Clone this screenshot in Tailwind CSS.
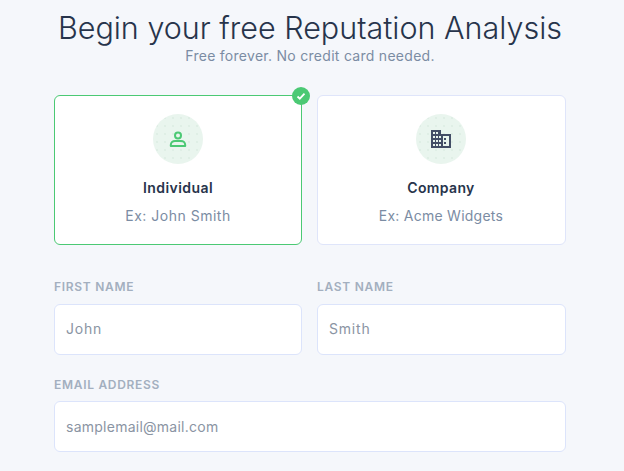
<!DOCTYPE html>
<html lang="en">
  <head>
    <meta charset="UTF-8" />
    <title>Begin your free Reputation Analysis</title>
    <script src="https://cdn.jsdelivr.net/npm/@tailwindcss/browser@4"></script>
  </head>

  <body class="h-[471px] overflow-hidden bg-[#f5f7fb] font-['Inter','Noto_Sans',sans-serif]">
    <main class="ml-[54px] w-[512px] pt-[8px]">
      <!-- Title -->
      <header class="text-center">
        <h1 class="-mx-4 text-[30.5px] leading-[39px] font-light whitespace-nowrap text-[#27344b]">Begin your free Reputation Analysis</h1>
        <p class="text-sm leading-[18px] tracking-[0.28px] text-[#7b8ca3]">Free forever. No credit card needed.</p>
      </header>

      <!-- Account type -->
      <section class="mt-[30px] grid grid-cols-[248px_249px] gap-[15px]">
        <div class="relative flex h-[150px] flex-col items-center rounded-md border border-[#4bc974] bg-white pt-[18px]">
          <div class="flex size-[50px] items-center justify-center rounded-full bg-[#e9f5ee] bg-[radial-gradient(#d3e5da_0.6px,transparent_0.8px)] bg-size-[8px_8px]">
            <svg class="size-5 text-[#4bc974]" viewBox="0 0 20 20" fill="none" stroke="currentColor" stroke-width="2">
              <circle cx="10" cy="6.5" r="3" />
              <path d="M2.800 17v-1c0-2.500 2-4 4.200-4h6c2.200 0 4.200 1.500 4.200 4v1z" stroke-linejoin="round" />
            </svg>
          </div>
          <h2 class="mt-[14px] text-sm leading-5 font-semibold tracking-[0.45px] text-[#27344b]">Individual</h2>
          <p class="mt-2 text-sm leading-5 tracking-[0.5px] text-[#7b8ca3]">Ex: John Smith</p>
          <span class="absolute -top-[9px] -right-[9px] flex size-[18px] items-center justify-center rounded-full bg-[#4bc974]">
            <svg class="size-3 text-white" viewBox="0 0 12 12" fill="none" stroke="currentColor" stroke-width="1.800">
              <path d="M2.500 6.500l2.300 2.200 4.700-5" />
            </svg>
          </span>
        </div>

        <div class="flex h-[150px] flex-col items-center rounded-md border border-[#dfe5fa] bg-white pt-[18px] pr-px">
          <div class="flex size-[50px] items-center justify-center rounded-full bg-[#e9f5ee] bg-[radial-gradient(#d3e5da_0.6px,transparent_0.8px)] bg-size-[8px_8px]">
            <svg class="h-[18px] w-5" viewBox="0 0 20 18" fill="#434e66">
              <path fill-rule="evenodd" d="M0 0h10v4h10v14H0zM2 2v2h2V2zM5 2v2h2V2zM2 6v2h2V6zM5 6v2h2V6zM8 6v2h2V6zM2 10v2h2v-2zM5 10v2h2v-2zM8 10v2h2v-2zM2 14v2h2v-2zM5 14v2h2v-2zM8 14v2h2v-2zM12 6v10h6V6zM13 8h2v2h-2zM13 12h2v2h-2z" />
            </svg>
          </div>
          <h2 class="mt-[14px] text-sm leading-5 font-semibold tracking-[0.35px] text-[#27344b]">Company</h2>
          <p class="mt-2 text-sm leading-5 tracking-[0.25px] text-[#7b8ca3]">Ex: Acme Widgets</p>
        </div>
      </section>

      <!-- Form -->
      <form class="mt-[34px]">
        <div class="grid grid-cols-[248px_249px] gap-[15px]">
          <div>
            <label class="block text-xs leading-4 font-semibold tracking-[0.7px] text-[#a3afbf]">FIRST NAME</label>
            <input type="text" placeholder="John" class="mt-[9px] block h-[51px] w-full rounded-md border border-[#dce4fb] bg-white px-[11px] pb-0.5 text-sm tracking-[0.8px] placeholder:text-[#8a94a3]" />
          </div>
          <div>
            <label class="block text-xs leading-4 font-semibold tracking-[0.7px] text-[#a3afbf]">LAST NAME</label>
            <input type="text" placeholder="Smith" class="mt-[9px] block h-[51px] w-full rounded-md border border-[#dce4fb] bg-white px-[11px] pb-0.5 text-sm tracking-[0.8px] placeholder:text-[#8a94a3]" />
          </div>
        </div>
        <label class="mt-[22px] block text-xs leading-4 font-semibold tracking-[0.7px] text-[#a3afbf]">EMAIL ADDRESS</label>
        <input type="email" placeholder="samplemail@mail.com" class="mt-2 block h-[51px] w-full rounded-md border border-[#dce4fb] bg-white px-[11px] text-sm tracking-[0.25px] placeholder:text-[#8a94a3]" />
      </form>
    </main>
  </body>
</html>
